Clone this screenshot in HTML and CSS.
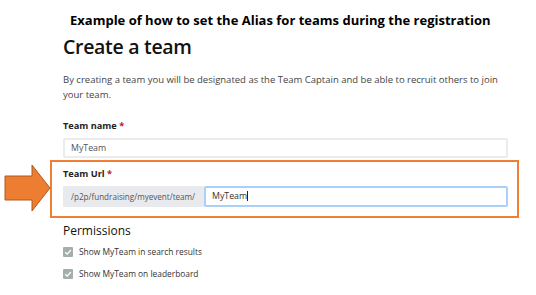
FILE: index.html
```html
<!DOCTYPE html>
<html>
<head>
<meta charset="utf-8">
<link rel="stylesheet" href="styles.css">
</head>
<body>
<div class="page">
  <h1 class="caption">Example of how to set the Alias for teams during the registration</h1>
  <div class="form">
    <h2 class="title">Create a team</h2>
    <p class="intro">By creating a team you will be designated as the Team Captain and be able to recruit others to join your team.</p>
    <div class="field">
      <div class="label">Team name <span class="req">*</span></div>
      <div class="input">MyTeam</div>
    </div>
    <div class="field url-field">
      <div class="label">Team Url <span class="req">*</span></div>
      <div class="group">
        <div class="prefix">/p2p/fundraising/myevent/team/</div>
        <div class="input focus">MyTeam<span class="caret"></span></div>
      </div>
    </div>
    <h3 class="perm">Permissions</h3>
    <div class="check-row"><span class="box"><svg viewBox="0 0 10 10" width="10" height="10"><path d="M2.2 5.2 L4.2 7.1 L7.9 3" fill="none" stroke="#fff" stroke-width="1.3"/></svg></span>Show MyTeam in search results</div>
    <div class="check-row"><span class="box"><svg viewBox="0 0 10 10" width="10" height="10"><path d="M2.2 5.2 L4.2 7.1 L7.9 3" fill="none" stroke="#fff" stroke-width="1.3"/></svg></span>Show MyTeam on leaderboard</div>
  </div>
  <div class="highlight"></div>
  <svg class="arrow" width="50" height="52" viewBox="0 0 50 52">
    <polygon points="1,12 28,12 28,1 46,24 28,47 28,36 1,36" fill="#ed7d31" stroke="#ae5a21" stroke-width="1"/>
  </svg>
</div>
</body>
</html>
```
FILE: styles.css
```css
* { box-sizing: border-box; }
html, body { margin: 0; padding: 0; background: #fff; }
body { font-family: "Open Sans", "Liberation Sans", sans-serif; color: #222; }
.page { position: relative; width: 536px; height: 295px; overflow: hidden; }
.caption {
  margin: 10px 0 0 70px;
  font-size: 13px;
  line-height: 20px;
  font-weight: 700;
  color: #000;
  white-space: nowrap;
}
.form { padding-left: 63px; width: 508px; }
.title {
  margin: 3px 0 0 0;
  font-size: 19.5px;
  line-height: 28px;
  font-weight: 600;
  letter-spacing: -0.3px;
  color: #111;
}
.intro {
  margin: 11px 0 0 0;
  font-size: 9.5px;
  line-height: 15px;
  color: #444;
}
.field { margin-top: 17px; }
.label { font-size: 9.2px; line-height: 14px; font-weight: 700; color: #222; }
.req { color: #d0102a; }
.input {
  margin-top: 5px;
  height: 20px;
  border: 2px solid #ececef;
  border-radius: 2px;
  padding: 0 6px;
  font-size: 8.8px;
  line-height: 16px;
  color: #555;
  background: #fff;
}
.url-field { margin-top: 9px; }
.group { display: flex; margin-top: 5px; }
.prefix {
  width: 141px;
  height: 21px;
  background: #e9eaed;
  padding: 0 6px 0 8px;
  font-size: 8.1px;
  line-height: 21px;
  color: #555;
  white-space: nowrap;
}
.group .input { margin-top: 0; flex: 1; height: 21px; border-color: #a9d1f7; line-height: 17px; color: #333; }
.caret { display: inline-block; width: 1px; height: 10px; background: #222; vertical-align: -2px; }
.perm {
  margin: 15px 0 0 0;
  font-size: 12px;
  line-height: 18px;
  font-weight: 400;
  color: #111;
}
.check-row {
  display: flex;
  align-items: center;
  gap: 6px;
  margin-top: 6px;
  font-size: 8.4px;
  line-height: 12px;
  color: #333;
}
.check-row + .check-row { margin-top: 10px; }
.box {
  width: 10px; height: 10px;
  background: #a5adad;
  border-radius: 1px;
  display: flex;
}
.highlight {
  position: absolute;
  left: 50px; top: 160px;
  width: 469px; height: 58px;
  border: 2px solid #f07f34;
}
.arrow { position: absolute; left: 4px; top: 164px; }
```
